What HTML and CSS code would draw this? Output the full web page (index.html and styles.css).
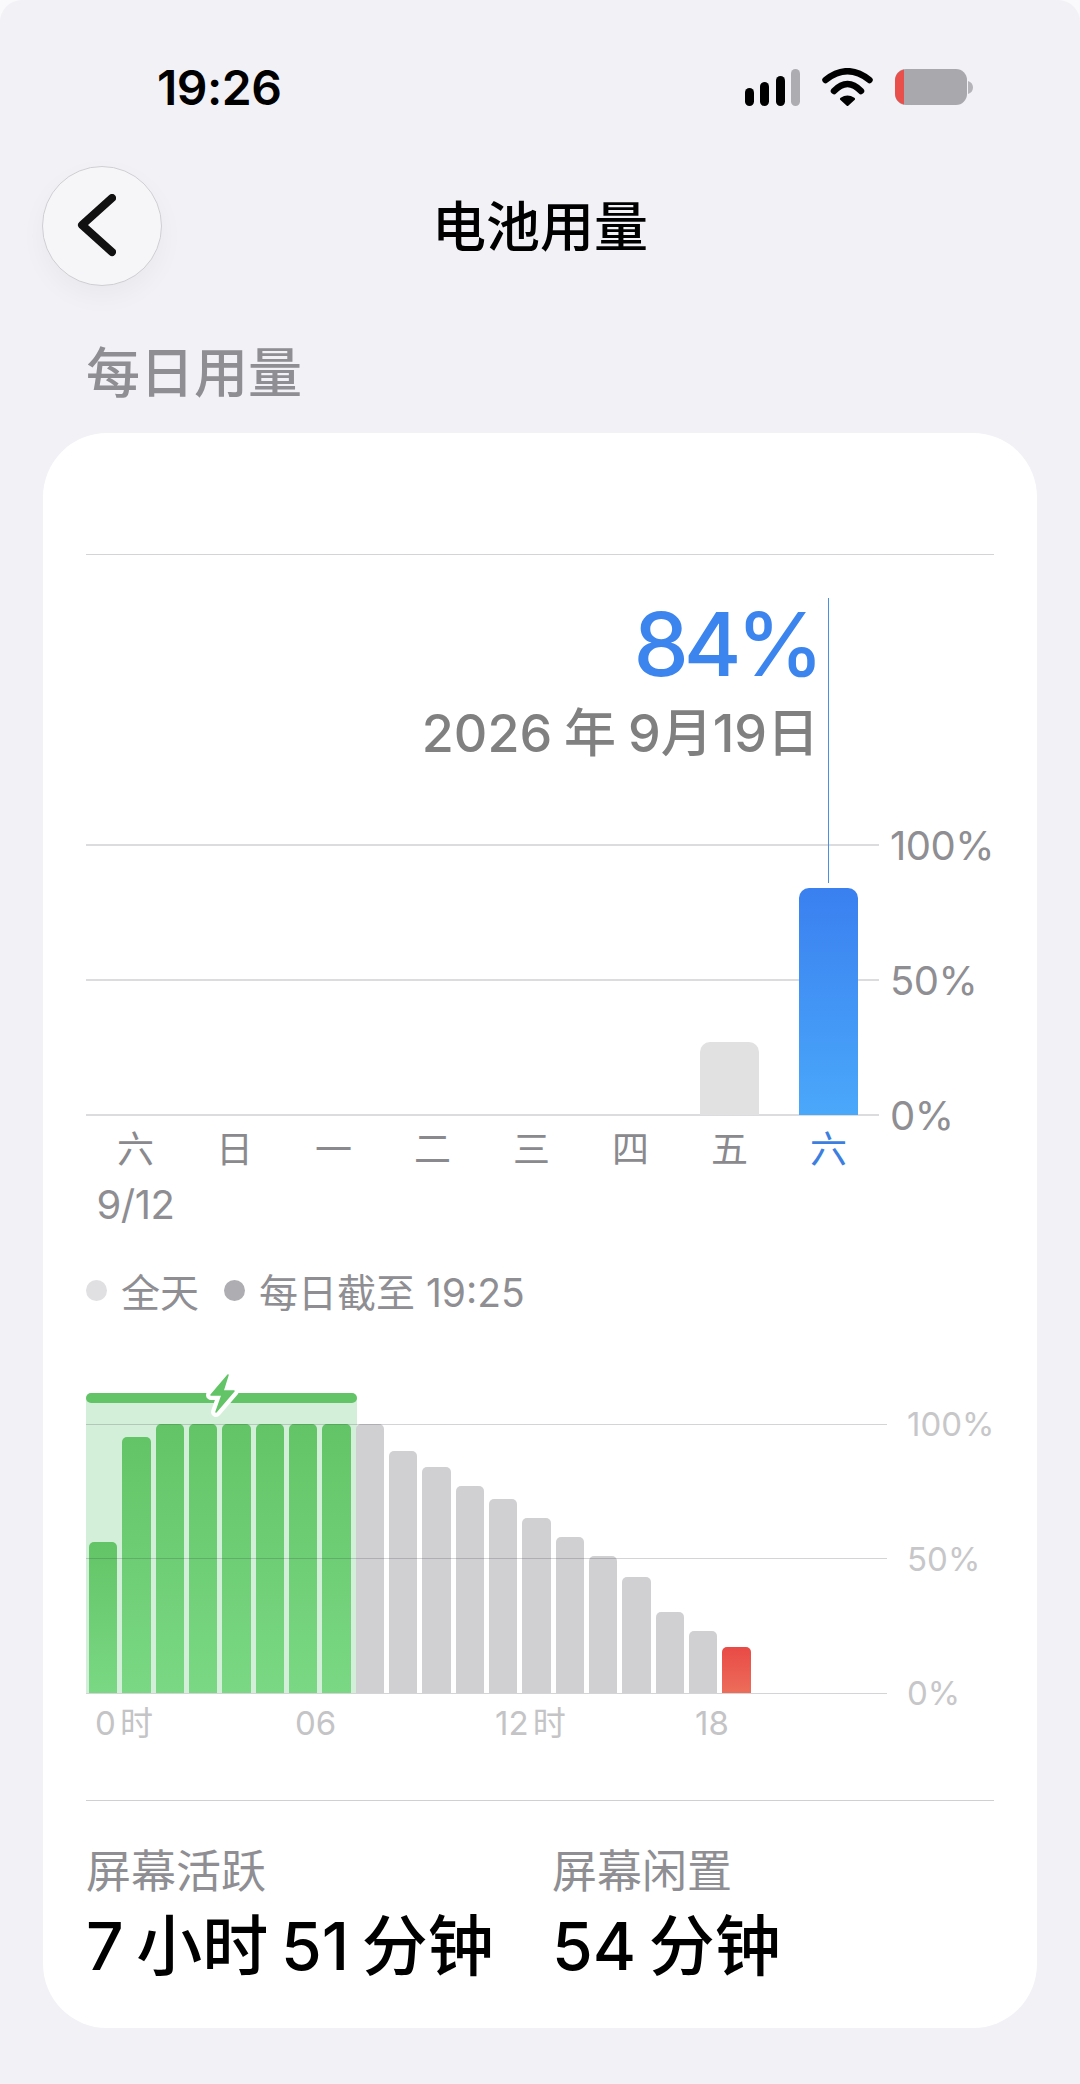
FILE: index.html
```html
<!DOCTYPE html>
<html lang="zh-CN">

<head>
    <meta charset="UTF-8">
    <title>电池用量</title>
    <link rel="stylesheet" href="styles.css">
</head>

<body>
    <div class="page">
        <!-- status bar -->
        <div class="status">
            <span class="time">19:26</span>
            <div class="status-icons">
                <svg width="55" height="37" viewBox="0 0 55 37">
                    <rect x="0" y="19" width="9" height="18" rx="4.5" fill="#000" />
                    <rect x="15" y="13" width="9" height="24" rx="4.5" fill="#000" />
                    <rect x="31" y="7" width="9" height="30" rx="4.5" fill="#000" />
                    <rect x="46" y="0" width="9" height="37" rx="4.5" fill="#adadb1" />
                </svg>
                <svg width="51" height="38" viewBox="0 0 51 38">
                    <path d="M3.5 12 Q25.5 -5.5 47.5 12" fill="none" stroke="#000" stroke-width="6.5" stroke-linecap="round" />
                    <path d="M12 23 Q25.5 9 39 23" fill="none" stroke="#000" stroke-width="6.5" stroke-linecap="round" />
                    <path d="M19.5 31 Q25.5 27 31.5 31 L25.5 36.5 Z" fill="#000" stroke="#000" stroke-width="3" stroke-linejoin="round" />
                </svg>
                <svg width="78" height="36" viewBox="0 0 78 36">
                    <path d="M73 12 C76 13 78 15 78 18.500 C78 22 76 24 73 25 Z" fill="#b5b5b9" />
                    <rect x="0" y="0" width="72" height="36" rx="11" fill="#a8a8ad" />
                    <path d="M9 0.500 C3.500 2 0 6 0 12 V24 C0 30 3.500 34 9 35.500 Z" fill="#e9504c" />
                </svg>
            </div>
        </div>

        <!-- nav -->
        <div class="nav">
            <div class="back">
                <svg width="40" height="64" viewBox="0 0 40 64">
                    <path d="M36 4 L6 31 L36 58" fill="none" stroke="#111" stroke-width="8" stroke-linecap="round" stroke-linejoin="round" />
                </svg>
            </div>
            <div class="title">电池用量</div>
        </div>

        <div class="section-title">每日用量</div>

        <div class="card">
            <!-- daily chart -->
            <div class="day-chart">
                <div class="cursor"></div>
                <div class="readout">
                    <div class="percent">84%</div>
                    <div class="date">2026 年 9月19日</div>
                </div>

                <div class="day-plot">
                    <div class="grid grid-day">
                        <div class="grid-row"><span class="grid-line"></span><span class="tick">100%</span></div>
                        <div class="grid-row"><span class="grid-line"></span><span class="tick">50%</span></div>
                        <div class="grid-row"><span class="grid-line"></span><span class="tick">0%</span></div>
                    </div>
                    <div class="day-bars">
                        <div class="day-slot"></div>
                        <div class="day-slot"></div>
                        <div class="day-slot"></div>
                        <div class="day-slot"></div>
                        <div class="day-slot"></div>
                        <div class="day-slot"></div>
                        <div class="day-slot"><div class="day-bar" style="height: 27%"></div></div>
                        <div class="day-slot"><div class="day-bar active" style="height: 84%"></div></div>
                    </div>
                </div>

                <div class="days">
                    <span>六</span>
                    <span>日</span>
                    <span>一</span>
                    <span>二</span>
                    <span>三</span>
                    <span>四</span>
                    <span>五</span>
                    <span class="current">六</span>
                </div>
                <div class="first-date">9/12</div>
            </div>

            <div class="legend">
                <i class="dot dot-light"></i><span>全天</span>
                <i class="dot dot-dark"></i><span>每日截至 19:25</span>
            </div>

            <!-- hourly chart -->
            <div class="hour-plot">
                <div class="charge-zone"></div>
                <div class="charge-bar"></div>
                <div class="hour-bars">
                    <div class="hour-bar green" style="height: 56%"></div>
                    <div class="hour-bar green" style="height: 95%"></div>
                    <div class="hour-bar green" style="height: 100%"></div>
                    <div class="hour-bar green" style="height: 100%"></div>
                    <div class="hour-bar green" style="height: 100%"></div>
                    <div class="hour-bar green" style="height: 100%"></div>
                    <div class="hour-bar green" style="height: 100%"></div>
                    <div class="hour-bar green" style="height: 100%"></div>
                    <div class="hour-bar" style="height: 100%"></div>
                    <div class="hour-bar" style="height: 90%"></div>
                    <div class="hour-bar" style="height: 84%"></div>
                    <div class="hour-bar" style="height: 77%"></div>
                    <div class="hour-bar" style="height: 72%"></div>
                    <div class="hour-bar" style="height: 65%"></div>
                    <div class="hour-bar" style="height: 58%"></div>
                    <div class="hour-bar" style="height: 51%"></div>
                    <div class="hour-bar" style="height: 43%"></div>
                    <div class="hour-bar" style="height: 30%"></div>
                    <div class="hour-bar" style="height: 23%"></div>
                    <div class="hour-bar red" style="height: 17%"></div>
                </div>
                <div class="grid grid-hour">
                    <div class="grid-row"><span class="grid-line"></span><span class="tick">100%</span></div>
                    <div class="grid-row"><span class="grid-line"></span><span class="tick">50%</span></div>
                    <div class="grid-row"><span class="grid-line"></span><span class="tick">0%</span></div>
                </div>
                <svg class="bolt" width="45" height="52" viewBox="0 0 45 52">
                    <path d="M28 7 L11 27 H22 L16 44 L34 23 H23 Z" fill="#62c466" stroke="#fff" stroke-width="10" stroke-linejoin="round" />
                    <path d="M28 7 L11 27 H22 L16 44 L34 23 H23 Z" fill="#62c466" stroke="#62c466" stroke-width="1.500" stroke-linejoin="round" />
                </svg>
            </div>
            <div class="hours">
                <span>0 时</span>
                <span>06</span>
                <span>12 时</span>
                <span>18</span>
            </div>

            <!-- screen time -->
            <div class="stats">
                <div class="stat stat-first">
                    <div class="stat-label">屏幕活跃</div>
                    <div class="stat-value">7 小时 51 分钟</div>
                </div>
                <div class="stat">
                    <div class="stat-label">屏幕闲置</div>
                    <div class="stat-value">54 分钟</div>
                </div>
            </div>
        </div>
    </div>
</body>

</html>
```

FILE: styles.css
```css
html {
    background: #fafafc;
}

body {
    margin: 0;
    padding: 0;
    font-family: "Inter", "Noto Sans CJK SC", sans-serif;
}

.page {
    width: 1080px;
    height: 2084px;
    overflow: hidden;
    background: #f1f1f6;
    border-radius: 22px 22px 0 0;
}

/* status bar */
.status {
    display: flex;
    justify-content: space-between;
    align-items: center;
    height: 46px;
    padding: 64px 107px 0 157px;
}

.time {
    font-size: 48px;
    font-weight: 600;
    letter-spacing: -0.5px;
    color: #000;
}

.status-icons {
    display: flex;
    align-items: center;
    gap: 22px;
}

/* nav */
.nav {
    display: grid;
    grid-template-columns: 120px 1fr 120px;
    align-items: center;
    height: 120px;
    margin-top: 56px;
    padding: 0 42px;
}

.back {
    display: flex;
    align-items: center;
    justify-content: center;
    box-sizing: border-box;
    width: 120px;
    height: 120px;
    padding-right: 12px;
    border: 1px solid #cfcfd3;
    border-radius: 50%;
    background: #f6f6f9;
    box-shadow: 0 10px 26px rgba(0, 0, 0, 0.04);
}

.title {
    padding-bottom: 5px;
    text-align: center;
    font-size: 54px;
    font-weight: 500;
    color: #000;
}

.section-title {
    height: 60px;
    line-height: 60px;
    margin: 58px 0 29px;
    padding-left: 86px;
    font-size: 54px;
    font-weight: 500;
    color: #8e8e93;
}

/* card */
.card {
    margin: 0 43px;
    padding: 121px 43px 44px;
    background: #fff;
    border-radius: 64px;
}

.day-chart {
    position: relative;
    border-top: 1px solid #d4d4d6;
}

.cursor {
    position: absolute;
    left: 742px;
    top: 43px;
    width: 1px;
    height: 285px;
    background: #4a90e2;
    z-index: 2;
}

.readout {
    height: 249px;
    padding: 41px 175px 0 0;
    text-align: right;
}

.percent {
    height: 96px;
    line-height: 96px;
    font-size: 88px;
    font-weight: 500;
    letter-spacing: -5px;
    color: #3d85ee;
}

.date {
    height: 60px;
    line-height: 60px;
    margin-top: 12px;
    font-size: 52px;
    font-weight: 500;
    word-spacing: -2px;
    color: #808080;
}

.day-plot {
    position: relative;
    width: 793px;
    height: 270px;
}

.grid {
    position: absolute;
    left: 0;
    right: -115px;
    display: flex;
    flex-direction: column;
    justify-content: space-between;
}

.grid-day {
    top: 0;
    bottom: 0;
}

.grid-hour {
    top: 31px;
    bottom: 0;
    right: 0;
}

.grid-row {
    display: flex;
    align-items: center;
    height: 0;
}

.grid-line {
    flex: 1;
    height: 2px;
    background: #dcdcde;
}

.tick {
    width: 104px;
    margin-left: 11px;
    font-size: 40px;
    letter-spacing: -0.5px;
    color: #8e8e93;
}

.day-bars {
    position: relative;
    display: flex;
    align-items: flex-end;
    height: 100%;
}

.day-slot {
    display: flex;
    align-items: flex-end;
    justify-content: center;
    width: 99px;
    height: 100%;
}

.day-bar {
    width: 59px;
    background: #e1e1e1;
    border-radius: 10px 10px 0 0;
}

.day-bar.active {
    background: linear-gradient(#3a80f0, #4aa8fa);
}

.days {
    display: grid;
    grid-template-columns: repeat(8, 99px);
    height: 44px;
    line-height: 44px;
    margin-top: 13px;
    text-align: center;
    font-size: 37px;
    color: #8a8a8e;
}

.days .current {
    color: #3d7fe0;
}

.first-date {
    width: 99px;
    height: 44px;
    line-height: 44px;
    margin-top: 11px;
    text-align: center;
    font-size: 40px;
    letter-spacing: -0.5px;
    color: #8e8e92;
}

.legend {
    display: flex;
    align-items: center;
    height: 44px;
    margin-top: 41px;
    font-size: 39px;
    color: #8e8e93;
}

.dot {
    width: 21px;
    height: 21px;
    margin-right: 14px;
    border-radius: 50%;
}

.dot-light {
    background: #e0e0e3;
}

.dot-dark {
    margin-left: 25px;
    background: #aeaeb2;
}

/* hourly chart */
.hour-plot {
    position: relative;
    height: 300px;
    margin-top: 81px;
}

.charge-zone {
    position: absolute;
    left: 0;
    top: 5px;
    bottom: 0;
    width: 271px;
    background: #d3efd9;
}

.charge-bar {
    position: absolute;
    left: 0;
    top: 0;
    width: 271px;
    height: 10px;
    background: #62c466;
    border-radius: 5px;
}

.hour-bars {
    position: absolute;
    left: 3px;
    bottom: 0;
    display: flex;
    align-items: flex-end;
    gap: 5px;
    height: 269px;
}

.hour-bar {
    width: 28.33px;
    background: #d0d0d3;
    border-radius: 5px 5px 0 0;
}

.hour-bar.green {
    background: linear-gradient(#62c466, #7ad884);
}

.hour-bar.red {
    background: linear-gradient(#e94a45, #ec6d5a);
}

.grid-hour .grid-line {
    height: 1px;
    background: rgba(60, 60, 67, 0.22);
}

.grid-hour .tick {
    width: 87px;
    margin-left: 20px;
    font-size: 33px;
    letter-spacing: 0;
    color: #c7c7c9;
}

.bolt {
    position: absolute;
    left: 114px;
    top: -25px;
}

.hours {
    display: grid;
    grid-template-columns: repeat(4, 200px);
    height: 40px;
    line-height: 40px;
    margin-top: 10px;
    padding-left: 9px;
    font-size: 33px;
    word-spacing: -5px;
    color: #c4c4c6;
}

/* screen time */
.stats {
    display: flex;
    margin-top: 57px;
    padding-top: 43px;
    border-top: 1px solid #d0d0d3;
}

.stat-first {
    width: 466px;
}

.stat-label {
    height: 56px;
    line-height: 56px;
    font-size: 45px;
    color: #8e8e93;
}

.stat-value {
    height: 76px;
    line-height: 76px;
    margin-top: 8px;
    font-size: 66px;
    font-weight: 500;
    word-spacing: -5px;
    color: #000;
}
```
